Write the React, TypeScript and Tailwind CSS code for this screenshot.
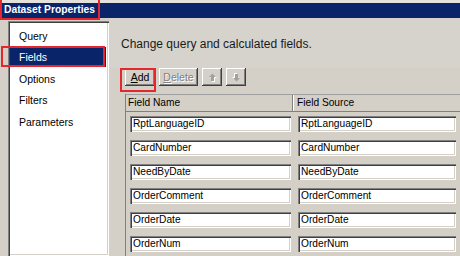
import React from "react";

const sunken =
  "shadow-[inset_1px_1px_0_#808080,inset_2px_2px_0_#404040,inset_-1px_-1px_0_#ffffff,inset_-2px_-2px_0_#d4d0c8]";
const raised =
  "shadow-[inset_-1px_-1px_0_#404040,inset_1px_1px_0_#ffffff,inset_-2px_-2px_0_#808080,inset_2px_2px_0_#d4d0c8]";

function Arrow({ up }: { up: boolean }) {
  return (
    <svg width="9" height="9" viewBox="0 0 9 9">
      <g transform={up ? "" : "rotate(180 4.5 4.5)"}>
        <path d="M5.5 1.5 L9 5 L7 5 L7 9 L4 9 L4 5 L2 5 Z" fill="#ffffff" />
        <path d="M4.5 0.5 L8 4 L6 4 L6 8 L3 8 L3 4 L1 4 Z" fill="#a0a0a0" />
      </g>
    </svg>
  );
}

const items = [
  { label: "Query", cls: "mt-[3px]" },
  { label: "Fields", cls: "mt-[1px]", sel: true },
  { label: "Options", cls: "mt-[2px]" },
  { label: "Filters", cls: "mt-[1px]" },
  { label: "Parameters", cls: "mt-[2px]" },
];

const rows = [
  "RptLanguageID",
  "CardNumber",
  "NeedByDate",
  "OrderComment",
  "OrderDate",
  "OrderNum",
];

function Input({ value, w }: { value: string; w: string }) {
  return (
    <div
      className={`${w} h-[16px] bg-white ${sunken} pl-[3px] flex items-center text-[10.2px] leading-none text-black whitespace-nowrap overflow-hidden`}
    >
      {value}
    </div>
  );
}

export default function App() {
  return (
    <div
      className="relative w-[460px] h-[256px] overflow-hidden bg-[#d4d0c8] text-black"
      style={{ fontFamily: '"Liberation Sans", Arial, sans-serif' }}
    >
      {/* title bar */}
      <div className="h-[3px] bg-[#e4e1dc]" />
      <div className="h-[15px] bg-[#0a246a] flex items-center pl-[4px]">
        <span className="text-white font-bold text-[10.3px] leading-none">Dataset Properties</span>
      </div>

      <div className="flex h-[238px]">
        {/* left nav */}
        <div className={`ml-[8px] mt-[3px] w-[101px] bg-white ${sunken} pl-[2px] pr-[3px] pt-[2px]`}>
          {items.map((it) => (
            <div
              key={it.label}
              className={`${it.cls} h-[20px] flex items-center pl-[9px] text-[10.5px] leading-none ${
                it.sel ? "bg-[#0a246a] text-white" : "text-black"
              }`}
            >
              {it.label}
            </div>
          ))}
        </div>

        {/* right content */}
        <div className="flex-1 flex flex-col">
          <div className="h-[52px] bg-[#d6d3cd] pl-[12px] pt-[18px]">
            <div className="text-[12px] leading-[16px] text-[#1a1a1a]">
              Change query and calculated fields.
            </div>
          </div>

          <div className="flex gap-[4px] pl-[16px] h-[18px]">
            <div className={`w-[30px] h-[18px] bg-[#d4d0c8] ${raised} flex items-center justify-center text-[10.5px] leading-none`}>
              <span>
                <span className="underline">A</span>dd
              </span>
            </div>
            <div className={`w-[39px] h-[18px] bg-[#d4d0c8] ${raised} flex items-center justify-center text-[10.5px] leading-none text-[#808080] [text-shadow:1px_1px_0_#ffffff]`}>
              <span>
                <span className="underline">D</span>elete
              </span>
            </div>
            <div className={`w-[20px] h-[18px] bg-[#d4d0c8] ${raised} flex items-center justify-center`}>
              <Arrow up />
            </div>
            <div className={`w-[20px] h-[18px] bg-[#d4d0c8] ${raised} flex items-center justify-center`}>
              <Arrow up={false} />
            </div>
          </div>

          {/* grid */}
          <div className="mt-[8px] ml-[16px] flex-1 border-l border-[#808080] flex flex-col">
            <div className="flex h-[18px] border-t border-[#a0a0a0] border-b border-b-[#808080]">
              <div className="w-[167px] flex items-center pl-[2px] text-[10.2px] leading-none border-r border-[#808080]">
                Field Name
              </div>
              <div className="flex-1 flex items-center pl-[3px] text-[10.2px] leading-none border-l border-white">
                Field Source
              </div>
            </div>
            {rows.map((r) => (
              <div key={r} className="flex h-[24px] items-center">
                <div className="w-[168px] pl-[4px]">
                  <Input value={r} w="w-[161px]" />
                </div>
                <div className="pl-[4px]">
                  <Input value={r} w="w-[158px]" />
                </div>
              </div>
            ))}
          </div>
        </div>
      </div>

      {/* annotation boxes */}
      <div className="absolute left-0 top-[-2px] w-[100px] h-[22px] border-2 border-[#e5262c]" />
      <div className="absolute left-[1px] top-[46px] w-[104px] h-[21px] border-2 border-[#e5262c]" />
      <div className="absolute left-[120px] top-[68px] w-[36px] h-[24px] border-2 border-[#e5262c]" />
    </div>
  );
}
